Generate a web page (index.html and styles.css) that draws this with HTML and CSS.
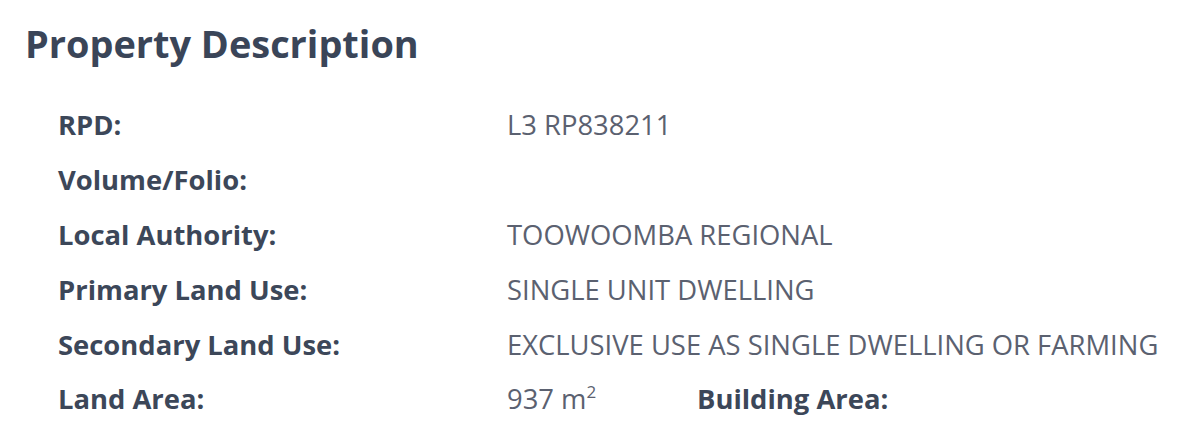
FILE: index.html
```html
<!DOCTYPE html>
<html>
<head>
<meta charset="utf-8">
<link rel="stylesheet" href="styles.css">
</head>
<body>
<section class="panel">
  <h2 class="title">Property Description</h2>
  <dl class="details">
    <dt>RPD:</dt><dd>L3 RP838211</dd>
    <dt>Volume/Folio:</dt><dd></dd>
    <dt>Local Authority:</dt><dd>TOOWOOMBA REGIONAL</dd>
    <dt>Primary Land Use:</dt><dd>SINGLE UNIT DWELLING</dd>
    <dt>Secondary Land Use:</dt><dd>EXCLUSIVE USE AS SINGLE DWELLING OR FARMING</dd>
    <dt>Land Area:</dt>
    <dd class="split">
      <span class="area">937 m<sup>2</sup></span>
      <span class="sublabel">Building Area:</span>
    </dd>
  </dl>
</section>
</body>
</html>
```
FILE: styles.css
```css
html, body {
  margin: 0;
  padding: 0;
  background: #ffffff;
}
body {
  font-family: "Open Sans", "Liberation Sans", sans-serif;
  color: #3a4558;
}
.panel {
  padding: 18px 0 0 25px;
}
.title {
  margin: 0;
  font-size: 37.9px;
  font-weight: 700;
  line-height: 50px;
  color: #3a4558;
}
.details {
  margin: 29px 0 0 33px;
  display: grid;
  grid-template-columns: 449px 1fr;
  grid-auto-rows: 54.9px;
  align-items: center;
}
.details dt {
  font-size: 27.4px;
  font-weight: 700;
  color: #3c4759;
}
.details dd {
  margin: 0;
  font-size: 27.4px;
  font-weight: 400;
  color: #5b6170;
}
.split {
  display: flex;
  align-items: center;
}
.area {
  width: 190px;
}
.area sup {
  font-size: 17px;
  line-height: 0;
  vertical-align: 11px;
}
.sublabel {
  font-weight: 700;
  color: #3c4759;
}
```
